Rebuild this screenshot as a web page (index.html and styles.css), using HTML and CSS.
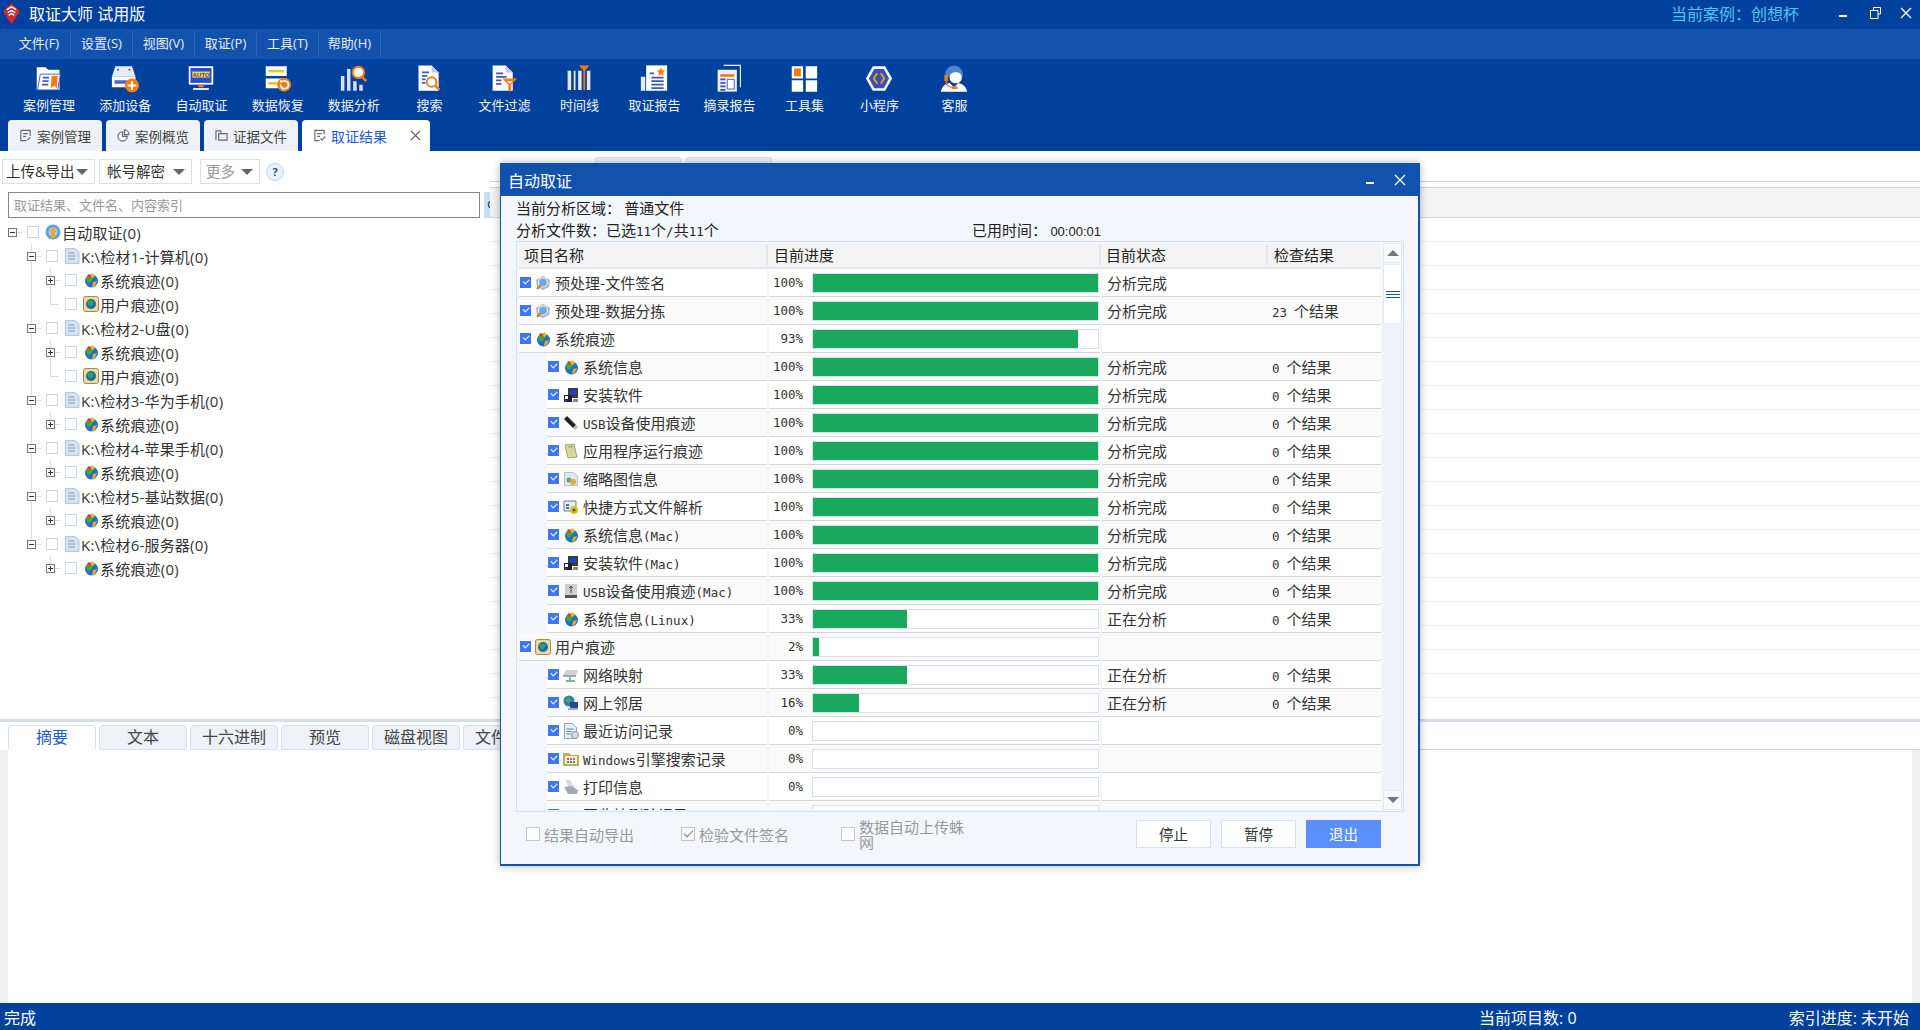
FILE: index.html
```html
<!DOCTYPE html>
<html lang="zh-CN">
<head>
    <meta charset="UTF-8">
    <title>取证大师 试用版</title>
    <link rel="stylesheet" href="styles.css">
</head>
<body>
    <!-- 图标定义 -->
    <svg class="defs" xmlns="http://www.w3.org/2000/svg">
        <symbol id="x-mark" viewBox="0 0 12 12">
            <path d="M1 1l10 10M11 1L1 11" fill="none" stroke="currentColor" stroke-width="1.300"/>
        </symbol>
        <symbol id="t-case" viewBox="0 0 32 32">
            <path d="M2 3h10l3 3h13v23H2z" fill="#fff"/>
            <path d="M6 11h23l-3 18H3z" fill="#fdfdff" stroke="#3c55c8" stroke-width="1"/>
            <path d="M9 15h7M8.500 19h7M8 23h7" stroke="#3c55c8" stroke-width="2"/>
            <path d="M19 13h7l-1 14-3-3-4 3z" fill="#f57c0c"/>
        </symbol>
        <symbol id="t-add" viewBox="0 0 32 32">
            <path d="M5 2h19l4 12H1z" fill="#e8ecf8"/>
            <circle cx="8" cy="6" r="1.200" fill="#3c55c8"/><circle cx="21" cy="6" r="1.200" fill="#3c55c8"/>
            <path d="M1 14h27v12H1z" fill="#fff"/>
            <path d="M4 18h14v4H4z" fill="#4a63c9"/>
            <circle cx="24" cy="24" r="8" fill="#f57c0c"/>
            <path d="M24 19v10M19 24h10" stroke="#fff" stroke-width="2.400"/>
        </symbol>
        <symbol id="t-auto" viewBox="0 0 32 32">
            <path d="M2 2h28v21H2z" fill="#fff"/>
            <path d="M4 4h24v17H4z" fill="#2a4bd0"/>
            <path d="M6 8h20v7H6z" fill="#f5d42a"/>
            <text x="16" y="14" text-anchor="middle" font-family="Liberation Sans" font-size="7" font-weight="700" fill="#2a4bd0">AUTO</text>
            <path d="M13 23h6v3h-6z" fill="#f57c0c"/>
            <path d="M7 27h18v2H7z" fill="#fff"/>
        </symbol>
        <symbol id="t-recover" viewBox="0 0 32 32">
            <path d="M2 2h24v11H2zM2 16h24v11H2z" fill="#fff"/>
            <path d="M5 6h18v3H5z" fill="#e5c92f"/>
            <path d="M5 20h12v3H5z" fill="#e5c92f"/>
            <circle cx="23" cy="23" r="8" fill="#f57c0c"/>
            <path d="M19 23a4.500 4.500 0 1 0 2-3.500" fill="none" stroke="#fff" stroke-width="2"/>
            <path d="M19 17l3 3-4 1z" fill="#fff"/>
        </symbol>
        <symbol id="t-analysis" viewBox="0 0 32 32">
            <path d="M1 13h4v17H1zM8 5h4v25H8zM15 19h4v11h-4zM22 23h4v7h-4z" fill="#d8def5"/>
            <circle cx="21" cy="9" r="6.500" fill="#fff" stroke="#f57c0c" stroke-width="2.400"/>
            <path d="M25 14l5 5" stroke="#f57c0c" stroke-width="3"/>
        </symbol>
        <symbol id="t-search" viewBox="0 0 32 32">
            <path d="M4 1h15l8 8v21H4z" fill="#fff"/>
            <path d="M19 1v8h8z" fill="#bcc6ec"/>
            <path d="M8 9h8M8 13h6M8 17h4M8 21h4" stroke="#3c55c8" stroke-width="2"/>
            <circle cx="19" cy="20" r="5.500" fill="#fff" stroke="#f57c0c" stroke-width="2.200"/>
            <path d="M23 24l5 5" stroke="#f57c0c" stroke-width="3"/>
        </symbol>
        <symbol id="t-filter" viewBox="0 0 32 32">
            <path d="M3 1h15l8 8v21H3z" fill="#fff"/>
            <path d="M18 1v8h8z" fill="#bcc6ec"/>
            <path d="M7 10h8M7 14h12M7 18h6M7 22h6" stroke="#3c55c8" stroke-width="2"/>
            <path d="M14 16h17l-7 7v8l-3-2v-6z" fill="#f57c0c"/>
            <path d="M19 19h7l-3 3z" fill="#fff"/>
        </symbol>
        <symbol id="t-timeline" viewBox="0 0 32 32">
            <path d="M3 7h4v22H3zM10 7h2v22h-2zM15 7h4v22h-4zM25 7h4v22h-4z" fill="#e4e8f8"/>
            <path d="M21 7h2v22h-2z" fill="#f57c0c"/>
            <path d="M16 1h12l-6 7z" fill="#f57c0c"/>
        </symbol>
        <symbol id="t-report" viewBox="0 0 32 32">
            <path d="M1 14h5v16H1z" fill="#e8ecf8"/>
            <path d="M7 1h24v29H7z" fill="#fff"/>
            <path d="M24 3l1.500 3.500 3.500.3-2.700 2.400.9 3.800-3.200-2-3.200 2 .9-3.800L19 6.800l3.500-.3z" fill="#f57c0c"/>
            <path d="M11 10h5M13 15h14M13 19h14M13 23h14M13 27h14" stroke="#3c55c8" stroke-width="2"/>
        </symbol>
        <symbol id="t-excerpt" viewBox="0 0 32 32">
            <path d="M10 1h19v25" fill="none" stroke="#fff" stroke-width="1.200"/>
            <path d="M3 6h22v25H3z" fill="#eef1fb"/>
            <path d="M6 11h16v3H6z" fill="#f57c0c"/>
            <path d="M6 17h6M6 21h6M6 25h6M6 29h6" stroke="#3c55c8" stroke-width="2"/>
            <path d="M14 17h8v11h-8z" fill="#fff" stroke="#3c55c8"/>
        </symbol>
        <symbol id="t-tools" viewBox="0 0 32 32">
            <path d="M2 2h13v14H2z" fill="#fff"/><path d="M4.500 4.500h8v9h-8z" fill="#f57c0c"/>
            <path d="M18 2h13v14H18zM2 18h13v13H2zM18 18h13v13H18z" fill="#fff"/>
        </symbol>
        <symbol id="t-mini" viewBox="0 0 32 32">
            <path d="M9 2h14l8 14-8 14H9L1 16z" fill="#fff"/>
            <path d="M10.500 5h11l6 11-6 11h-11l-6-11z" fill="#3a50b8"/>
            <path d="M14 10l-4 6 4 6M18 10l4 6-4 6" fill="none" stroke="#f5a20c" stroke-width="2"/>
        </symbol>
        <symbol id="t-service" viewBox="0 0 32 32">
            <path d="M16 1a10 10 0 0 1 10 10v3H6v-3A10 10 0 0 1 16 1z" fill="#4f85d2"/>
            <ellipse cx="18" cy="15" rx="7" ry="6.500" fill="#fff"/>
            <path d="M1 31c1-6 5-9 10-10l5 5 5-5c5 1 9 4 10 10z" fill="#fff"/>
            <path d="M5 12h4v7H5z" fill="#f57c0c"/>
            <path d="M7 19c0 5 4 7 8 7" fill="none" stroke="#f57c0c" stroke-width="1.500"/>
            <path d="M14 25h6v3h-6z" fill="#f57c0c"/>
        </symbol>

        <symbol id="i-sys" viewBox="0 0 16 16">
            <circle cx="8.500" cy="9" r="6.500" fill="#1e6fc2"/>
            <path d="M3 6c2-3 6-4 8-2l-2 4-2 3-3-1z" fill="#3da83d"/>
            <path d="M5 2l3 1-1 3-3-1z" fill="#e0412c"/>
            <path d="M9 1l3 2-2 3-2-1z" fill="#f0c020"/>
            <path d="M10 10l4-1-2 5-3 1z" fill="#e8a530"/>
        </symbol>
        <symbol id="i-user" viewBox="0 0 16 16">
            <rect x=".500" y=".500" width="15" height="15" rx="2" fill="#e9d9a6" stroke="#a98a45"/>
            <circle cx="8" cy="8" r="5" fill="#1d6ab0"/>
            <path d="M4 6c2-2 5-2 7 0l-2 4H6z" fill="#3da05a"/>
        </symbol>
        <symbol id="i-doc" viewBox="0 0 16 16">
            <path d="M1.500 .500h10l3.500 3.500v11.500H1.500z" fill="#d3e3f3" stroke="#b3c8dc"/>
            <path d="M4 5h6M4 8h7M4 11h7" stroke="#7fa1b8"/>
        </symbol>
        <symbol id="i-root" viewBox="0 0 16 16">
            <circle cx="8" cy="8" r="7.500" fill="#5da2e2"/>
            <circle cx="8" cy="8" r="4.500" fill="#a9d2f4"/>
            <path d="M8 3l4 5H10v6H6V8H4z" fill="#eda72d"/>
        </symbol>
        <symbol id="i-disk" viewBox="0 0 16 16">
            <path d="M1 5l7-4 7 4-1 7-6 3-6-3z" fill="#aeb3ba"/>
            <circle cx="8" cy="7.500" r="4.500" fill="#6ea9e4" stroke="#f1f3f6" stroke-width="1.200"/>
            <path d="M2 14l4-4" stroke="#c97f30" stroke-width="2.200"/>
        </symbol>
        <symbol id="i-install" viewBox="0 0 16 16">
            <path d="M5 1h10v10H5z" fill="#3a3a3a"/><path d="M7 3h6v5H7z" fill="#1f3fcb"/>
            <path d="M1 8h8v7H1z" fill="#222"/><path d="M2 9h3v3H2z" fill="#fff"/>
            <path d="M2 13h2v2H2z" fill="#1f3fcb"/>
            <path d="M10 12h5v3h-5z" fill="#8a8a8a"/>
        </symbol>
        <symbol id="i-usb" viewBox="0 0 16 16">
            <path d="M1 4l3-3 9 9-3 3z" fill="#222"/>
            <path d="M10 13l3-3 2 2-3 3z" fill="#bbb"/>
        </symbol>
        <symbol id="i-note" viewBox="0 0 16 16">
            <path d="M2 2l9-1 3 13-9 1z" fill="#d7d99a" stroke="#8c9464" stroke-width=".800"/>
            <path d="M5 4l5-.500" stroke="#8c9464"/>
        </symbol>
        <symbol id="i-thumb" viewBox="0 0 16 16">
            <path d="M1.500 1.500h9l4 4v9h-13z" fill="#dce8f5" stroke="#aac0d8"/>
            <circle cx="6" cy="9" r="2.500" fill="#6fa24a"/><circle cx="10" cy="11" r="3" fill="#e7a93b"/>
        </symbol>
        <symbol id="i-link" viewBox="0 0 16 16">
            <path d="M1 2h12v10H1z" fill="#e9edf3" stroke="#55606c" stroke-width=".800"/>
            <path d="M3 5h3v2H3zM3 8h3v2H3z" fill="#2f77b8"/>
            <circle cx="11" cy="11" r="4" fill="#d9c31c"/><circle cx="11" cy="11" r="1.500" fill="#5a5a20"/>
        </symbol>
        <symbol id="i-usbmac" viewBox="0 0 16 16">
            <path d="M2 1h12v14H2z" fill="#cfcfcf"/>
            <path d="M2 12h12v3H2z" fill="#555"/>
            <path d="M8 3v7M6 5l2-2 2 2" fill="none" stroke="#444"/>
        </symbol>
        <symbol id="i-net" viewBox="0 0 16 16">
            <path d="M3 3h12l-2 5H0z" fill="#cfd3d8"/>
            <path d="M0 8h13v2H0z" fill="#9ea4aa"/>
            <path d="M7 10v3M3 14h9" stroke="#3da85a" stroke-width="1.400"/>
        </symbol>
        <symbol id="i-hood" viewBox="0 0 16 16">
            <circle cx="6" cy="6" r="5.500" fill="#2e7cc2"/>
            <path d="M2 4l5-2 1 4-4 2z" fill="#4aa84a"/>
            <path d="M7 7h8v6H7z" fill="#274a88"/><path d="M5 13h10v2H5z" fill="#a5acb5"/>
        </symbol>
        <symbol id="i-recent" viewBox="0 0 16 16">
            <path d="M1.500 .500h8l4 4v11h-12z" fill="#e6eef8" stroke="#8ea6c2"/>
            <path d="M3.500 6h7M3.500 8.500h5M3.500 11h4" stroke="#4f8dc7"/>
            <circle cx="12" cy="12" r="3.500" fill="#d5dbe3" stroke="#8a939f"/>
        </symbol>
        <symbol id="i-winfolder" viewBox="0 0 16 16">
            <path d="M0 2h6l2 2h8v11H0z" fill="#c9a85a"/>
            <path d="M2 5h12v8H2z" fill="#f5efd5"/>
            <path d="M4 7h2v2H4zM7 7h2v2H7zM10 7h2v2h-2z" fill="#d65f4a"/>
            <path d="M4 10h2v2H4zM7 10h2v2H7zM10 10h2v2h-2z" fill="#4a80c2"/>
        </symbol>
        <symbol id="i-print" viewBox="0 0 16 16">
            <path d="M2 1l5 0 5 8-5 2z" fill="#d5dbe3"/>
            <path d="M1 8l7-1 7 4-1 4H5z" fill="#a3a9b0"/>
        </symbol>
        <symbol id="i-trash" viewBox="0 0 16 16">
            <path d="M1 3h6l2 2h6v9H1z" fill="#f0dba0"/>
        </symbol>
    </svg>

    <div class="app">
        <header class="titlebar">
            <svg class="logo" viewBox="0 0 18 22">
                <path d="M9 0l9 9-9 13L0 9z" fill="#d8262c"/>
                <path d="M4 7l5-3 5 3M5 10l4-2 4 2M6 13l3-2 3 2" fill="none" stroke="#fff" stroke-width="1.500"/>
            </svg>
            <span class="app-name">取证大师 试用版</span>
            <span class="case-name">当前案例：创想杯</span>
            <span class="win-btn"><i class="min-mark"></i></span>
            <span class="win-btn">
                <svg class="restore-mark" viewBox="0 0 11 12"><path d="M3.500 3V.500h7V7H8M.500 3.500h7.500v8H.500zM.500 3.500h7.500" fill="none" stroke="#fff"/></svg>
            </span>
            <span class="win-btn"><svg class="x-icon"><use href="#x-mark"/></svg></span>
        </header>

        <nav class="menubar">
            <a>文件(F)</a><a>设置(S)</a><a>视图(V)</a><a>取证(P)</a><a>工具(T)</a><a>帮助(H)</a>
        </nav>

        <div class="toolbar">
            <a class="tool"><svg><use href="#t-case"/></svg><span>案例管理</span></a>
            <a class="tool"><svg><use href="#t-add"/></svg><span>添加设备</span></a>
            <a class="tool"><svg><use href="#t-auto"/></svg><span>自动取证</span></a>
            <a class="tool"><svg><use href="#t-recover"/></svg><span>数据恢复</span></a>
            <a class="tool"><svg><use href="#t-analysis"/></svg><span>数据分析</span></a>
            <a class="tool"><svg><use href="#t-search"/></svg><span>搜索</span></a>
            <a class="tool"><svg><use href="#t-filter"/></svg><span>文件过滤</span></a>
            <a class="tool"><svg><use href="#t-timeline"/></svg><span>时间线</span></a>
            <a class="tool"><svg><use href="#t-report"/></svg><span>取证报告</span></a>
            <a class="tool"><svg><use href="#t-excerpt"/></svg><span>摘录报告</span></a>
            <a class="tool"><svg><use href="#t-tools"/></svg><span>工具集</span></a>
            <a class="tool"><svg><use href="#t-mini"/></svg><span>小程序</span></a>
            <a class="tool"><svg><use href="#t-service"/></svg><span>客服</span></a>
        </div>

        <div class="tabbar">
            <a class="tab">
                <svg viewBox="0 0 14 14"><path d="M2 1.500h10v6M2 1.500v11h6M4.500 5h5M4.500 8h3M9 12l3-3" fill="none" stroke="#666" stroke-width="1.200"/></svg>
                案例管理
            </a>
            <a class="tab">
                <svg viewBox="0 0 14 14"><path d="M6 3a5 5 0 1 0 5 5H6zM8 1a5 5 0 0 1 5 5H8z" fill="none" stroke="#666" stroke-width="1.200"/></svg>
                案例概览
            </a>
            <a class="tab">
                <svg viewBox="0 0 14 14"><path d="M1 12V2h5l1 2M4 5h9v7H4z" fill="none" stroke="#666" stroke-width="1.200"/></svg>
                证据文件
            </a>
            <a class="tab tab-on">
                <svg viewBox="0 0 14 14"><path d="M12 6V1.500H2v11h5M4.500 5h5M4.500 8h3M8 10l2 2 3-4" fill="none" stroke="#666" stroke-width="1.200"/></svg>
                <b>取证结果</b>
                <svg class="tab-close"><use href="#x-mark"/></svg>
            </a>
        </div>

        <div class="workspace">
            <div class="upper">
                <aside class="left-pane">
                    <div class="subtools">
                        <a class="drop">上传&amp;导出<i></i></a>
                        <a class="drop">帐号解密<i></i></a>
                        <a class="drop drop-off">更多<i></i></a>
                        <span class="help">?</span>
                    </div>
                    <div class="searchbar">
                        <input class="search-input" placeholder="取证结果、文件名、内容索引">
                        <span class="search-btn">
                            <svg viewBox="0 0 12 12"><circle cx="5" cy="5" r="3.500" fill="none" stroke="#35507a" stroke-width="1.500"/><path d="M8 8l3 3" stroke="#35507a" stroke-width="1.500"/></svg>
                        </span>
                    </div>
                    <ul class="tree">
                        <li>
                            <div class="node"><span class="exp minus"></span><span class="cb"></span><svg><use href="#i-root"/></svg><span>自动取证(0)</span></div>
                            <ul class="branch">
                                <li>
                                    <div class="node"><span class="exp minus"></span><span class="cb"></span><svg><use href="#i-doc"/></svg><span>K:\检材1-计算机(0)</span></div>
                                    <ul class="branch">
                                        <li><div class="node"><span class="exp plus"></span><span class="cb"></span><svg><use href="#i-sys"/></svg><span>系统痕迹(0)</span></div></li>
                                        <li><div class="node"><span class="exp leaf"></span><span class="cb"></span><svg><use href="#i-user"/></svg><span>用户痕迹(0)</span></div></li>
                                    </ul>
                                </li>
                                <li>
                                    <div class="node"><span class="exp minus"></span><span class="cb"></span><svg><use href="#i-doc"/></svg><span>K:\检材2-U盘(0)</span></div>
                                    <ul class="branch">
                                        <li><div class="node"><span class="exp plus"></span><span class="cb"></span><svg><use href="#i-sys"/></svg><span>系统痕迹(0)</span></div></li>
                                        <li><div class="node"><span class="exp leaf"></span><span class="cb"></span><svg><use href="#i-user"/></svg><span>用户痕迹(0)</span></div></li>
                                    </ul>
                                </li>
                                <li>
                                    <div class="node"><span class="exp minus"></span><span class="cb"></span><svg><use href="#i-doc"/></svg><span>K:\检材3-华为手机(0)</span></div>
                                    <ul class="branch">
                                        <li><div class="node"><span class="exp plus"></span><span class="cb"></span><svg><use href="#i-sys"/></svg><span>系统痕迹(0)</span></div></li>
                                    </ul>
                                </li>
                                <li>
                                    <div class="node"><span class="exp minus"></span><span class="cb"></span><svg><use href="#i-doc"/></svg><span>K:\检材4-苹果手机(0)</span></div>
                                    <ul class="branch">
                                        <li><div class="node"><span class="exp plus"></span><span class="cb"></span><svg><use href="#i-sys"/></svg><span>系统痕迹(0)</span></div></li>
                                    </ul>
                                </li>
                                <li>
                                    <div class="node"><span class="exp minus"></span><span class="cb"></span><svg><use href="#i-doc"/></svg><span>K:\检材5-基站数据(0)</span></div>
                                    <ul class="branch">
                                        <li><div class="node"><span class="exp plus"></span><span class="cb"></span><svg><use href="#i-sys"/></svg><span>系统痕迹(0)</span></div></li>
                                    </ul>
                                </li>
                                <li>
                                    <div class="node"><span class="exp minus"></span><span class="cb"></span><svg><use href="#i-doc"/></svg><span>K:\检材6-服务器(0)</span></div>
                                    <ul class="branch">
                                        <li><div class="node"><span class="exp plus"></span><span class="cb"></span><svg><use href="#i-sys"/></svg><span>系统痕迹(0)</span></div></li>
                                    </ul>
                                </li>
                            </ul>
                        </li>
                    </ul>
                </aside>
                <section class="right-pane">
                    <div class="back-tabs"><span></span><span></span></div>
                    <div class="result-head"></div>
                    <div class="result-rows"></div>
                </section>
            </div>
            <div class="lower">
                <div class="detail-tabs">
                    <a class="dtab dtab-on">摘要</a>
                    <a class="dtab">文本</a>
                    <a class="dtab">十六进制</a>
                    <a class="dtab">预览</a>
                    <a class="dtab">磁盘视图</a>
                    <a class="dtab">文件属性</a>
                    <div class="dtab-rest"></div>
                </div>
                <div class="detail-body"><div class="detail-main"></div></div>
            </div>
        </div>

        <footer class="statusbar">
            <span class="status-msg">完成</span>
            <span class="status-count">当前项目数: 0</span>
            <span class="status-index">索引进度: 未开始</span>
        </footer>
    </div>

    <div class="dialog">
        <div class="dlg-title">
            <span>自动取证</span>
            <i class="min-mark dlg-min"></i>
            <svg class="x-icon dlg-close"><use href="#x-mark"/></svg>
        </div>
        <div class="dlg-info">当前分析区域： 普通文件</div>
        <div class="dlg-info dlg-files">
            <span class="files-count">分析文件数：已选<span class="en">11</span>个<span class="en">/</span>共<span class="en">11</span>个</span>
            <span>已用时间： <span class="elapsed">00:00:01</span></span>
        </div>

        <div class="grid-wrap">
            <div class="grid">
                <div class="grid-head">
                    <span class="h-name">项目名称</span>
                    <span class="h-prog">目前进度</span>
                    <span class="h-state">目前状态</span>
                    <span class="h-res">检查结果</span>
                </div>
                <div class="grid-rows">
                    <div class="row">
                        <div class="c-name"><span class="check"></span><svg><use href="#i-disk"/></svg><span>预处理-文件签名</span></div>
                        <div class="c-prog"><span class="pct">100%</span><div class="bar"><div class="fill" style="width:100%"></div></div></div>
                        <div class="c-info"><span class="state">分析完成</span></div>
                    </div>
                    <div class="row">
                        <div class="c-name"><span class="check"></span><svg><use href="#i-disk"/></svg><span>预处理-数据分拣</span></div>
                        <div class="c-prog"><span class="pct">100%</span><div class="bar"><div class="fill" style="width:100%"></div></div></div>
                        <div class="c-info"><span class="state">分析完成</span><span class="res"><span class="en">23</span>个结果</span></div>
                    </div>
                    <div class="row">
                        <div class="c-name"><span class="check"></span><svg><use href="#i-sys"/></svg><span>系统痕迹</span></div>
                        <div class="c-prog"><span class="pct">93%</span><div class="bar"><div class="fill" style="width:93%"></div></div></div>
                        <div class="c-info"></div>
                    </div>
                    <div class="row sub">
                        <div class="c-name"><span class="check"></span><svg><use href="#i-sys"/></svg><span>系统信息</span></div>
                        <div class="c-prog"><span class="pct">100%</span><div class="bar"><div class="fill" style="width:100%"></div></div></div>
                        <div class="c-info"><span class="state">分析完成</span><span class="res"><span class="en">0</span>个结果</span></div>
                    </div>
                    <div class="row sub">
                        <div class="c-name"><span class="check"></span><svg><use href="#i-install"/></svg><span>安装软件</span></div>
                        <div class="c-prog"><span class="pct">100%</span><div class="bar"><div class="fill" style="width:100%"></div></div></div>
                        <div class="c-info"><span class="state">分析完成</span><span class="res"><span class="en">0</span>个结果</span></div>
                    </div>
                    <div class="row sub">
                        <div class="c-name"><span class="check"></span><svg><use href="#i-usb"/></svg><span><span class="en">USB</span>设备使用痕迹</span></div>
                        <div class="c-prog"><span class="pct">100%</span><div class="bar"><div class="fill" style="width:100%"></div></div></div>
                        <div class="c-info"><span class="state">分析完成</span><span class="res"><span class="en">0</span>个结果</span></div>
                    </div>
                    <div class="row sub">
                        <div class="c-name"><span class="check"></span><svg><use href="#i-note"/></svg><span>应用程序运行痕迹</span></div>
                        <div class="c-prog"><span class="pct">100%</span><div class="bar"><div class="fill" style="width:100%"></div></div></div>
                        <div class="c-info"><span class="state">分析完成</span><span class="res"><span class="en">0</span>个结果</span></div>
                    </div>
                    <div class="row sub">
                        <div class="c-name"><span class="check"></span><svg><use href="#i-thumb"/></svg><span>缩略图信息</span></div>
                        <div class="c-prog"><span class="pct">100%</span><div class="bar"><div class="fill" style="width:100%"></div></div></div>
                        <div class="c-info"><span class="state">分析完成</span><span class="res"><span class="en">0</span>个结果</span></div>
                    </div>
                    <div class="row sub">
                        <div class="c-name"><span class="check"></span><svg><use href="#i-link"/></svg><span>快捷方式文件解析</span></div>
                        <div class="c-prog"><span class="pct">100%</span><div class="bar"><div class="fill" style="width:100%"></div></div></div>
                        <div class="c-info"><span class="state">分析完成</span><span class="res"><span class="en">0</span>个结果</span></div>
                    </div>
                    <div class="row sub">
                        <div class="c-name"><span class="check"></span><svg><use href="#i-sys"/></svg><span>系统信息<span class="en">(Mac)</span></span></div>
                        <div class="c-prog"><span class="pct">100%</span><div class="bar"><div class="fill" style="width:100%"></div></div></div>
                        <div class="c-info"><span class="state">分析完成</span><span class="res"><span class="en">0</span>个结果</span></div>
                    </div>
                    <div class="row sub">
                        <div class="c-name"><span class="check"></span><svg><use href="#i-install"/></svg><span>安装软件<span class="en">(Mac)</span></span></div>
                        <div class="c-prog"><span class="pct">100%</span><div class="bar"><div class="fill" style="width:100%"></div></div></div>
                        <div class="c-info"><span class="state">分析完成</span><span class="res"><span class="en">0</span>个结果</span></div>
                    </div>
                    <div class="row sub">
                        <div class="c-name"><span class="check"></span><svg><use href="#i-usbmac"/></svg><span><span class="en">USB</span>设备使用痕迹<span class="en">(Mac)</span></span></div>
                        <div class="c-prog"><span class="pct">100%</span><div class="bar"><div class="fill" style="width:100%"></div></div></div>
                        <div class="c-info"><span class="state">分析完成</span><span class="res"><span class="en">0</span>个结果</span></div>
                    </div>
                    <div class="row sub">
                        <div class="c-name"><span class="check"></span><svg><use href="#i-sys"/></svg><span>系统信息<span class="en">(Linux)</span></span></div>
                        <div class="c-prog"><span class="pct">33%</span><div class="bar"><div class="fill" style="width:33%"></div></div></div>
                        <div class="c-info"><span class="state">正在分析</span><span class="res"><span class="en">0</span>个结果</span></div>
                    </div>
                    <div class="row">
                        <div class="c-name"><span class="check"></span><svg><use href="#i-user"/></svg><span>用户痕迹</span></div>
                        <div class="c-prog"><span class="pct">2%</span><div class="bar"><div class="fill" style="width:2%"></div></div></div>
                        <div class="c-info"></div>
                    </div>
                    <div class="row sub">
                        <div class="c-name"><span class="check"></span><svg><use href="#i-net"/></svg><span>网络映射</span></div>
                        <div class="c-prog"><span class="pct">33%</span><div class="bar"><div class="fill" style="width:33%"></div></div></div>
                        <div class="c-info"><span class="state">正在分析</span><span class="res"><span class="en">0</span>个结果</span></div>
                    </div>
                    <div class="row sub">
                        <div class="c-name"><span class="check"></span><svg><use href="#i-hood"/></svg><span>网上邻居</span></div>
                        <div class="c-prog"><span class="pct">16%</span><div class="bar"><div class="fill" style="width:16%"></div></div></div>
                        <div class="c-info"><span class="state">正在分析</span><span class="res"><span class="en">0</span>个结果</span></div>
                    </div>
                    <div class="row sub">
                        <div class="c-name"><span class="check"></span><svg><use href="#i-recent"/></svg><span>最近访问记录</span></div>
                        <div class="c-prog"><span class="pct">0%</span><div class="bar"></div></div>
                        <div class="c-info"></div>
                    </div>
                    <div class="row sub">
                        <div class="c-name"><span class="check"></span><svg><use href="#i-winfolder"/></svg><span><span class="en">Windows</span>引擎搜索记录</span></div>
                        <div class="c-prog"><span class="pct">0%</span><div class="bar"></div></div>
                        <div class="c-info"></div>
                    </div>
                    <div class="row sub">
                        <div class="c-name"><span class="check"></span><svg><use href="#i-print"/></svg><span>打印信息</span></div>
                        <div class="c-prog"><span class="pct">0%</span><div class="bar"></div></div>
                        <div class="c-info"></div>
                    </div>
                    <div class="row sub">
                        <div class="c-name"><span class="check"></span><svg><use href="#i-trash"/></svg><span>回收站删除记录</span></div>
                        <div class="c-prog"><span class="pct">0%</span><div class="bar"></div></div>
                        <div class="c-info"></div>
                    </div>
                </div>
            </div>
            <div class="scroll">
                <span class="sc-btn"><i class="arr-up"></i></span>
                <span class="sc-thumb"><i></i></span>
                <span class="sc-track"></span>
                <span class="sc-btn"><i class="arr-down"></i></span>
            </div>
        </div>

        <div class="dlg-foot">
            <label class="opt opt-a"><span class="opt-box"></span>结果自动导出</label>
            <label class="opt opt-b"><span class="opt-box opt-box-on"></span>检验文件签名</label>
            <label class="opt opt-c"><span class="opt-box"></span><span class="opt-wrap">数据自动上传蛛网</span></label>
            <a class="btn">停止</a>
            <a class="btn">暂停</a>
            <a class="btn btn-main">退出</a>
        </div>
    </div>
</body>
</html>
```

FILE: styles.css
```css
* {
    box-sizing: border-box;
}
html, body {
    margin: 0;
    height: 100%;
    overflow: hidden;
}
body {
    font-family: "Open Sans", "Noto Sans CJK SC", sans-serif;
    color: #333;
    background: #fff;
}
ul {
    list-style: none;
    margin: 0;
    padding: 0;
}
.defs {
    display: none;
}
.app {
    display: flex;
    flex-direction: column;
    height: 1030px;
}

/* 标题栏 */
.titlebar {
    display: flex;
    align-items: center;
    height: 29px;
    flex: none;
    background: #00419e;
    color: #fff;
    padding: 0 0 3px 3px;
}
.logo {
    width: 17px;
    height: 21px;
}
.app-name {
    margin-left: 9px;
    font-size: 16px;
}
.case-name {
    margin-left: auto;
    margin-right: 28px;
    font-size: 16px;
    color: #4fc3f7;
}
.win-btn {
    display: flex;
    align-items: center;
    justify-content: center;
    width: 32px;
    height: 20px;
}
.win-btn:last-child {
    width: 29px;
}
.x-icon {
    width: 12px;
    height: 12px;
}
.min-mark {
    display: inline-block;
    width: 8px;
    height: 2px;
    background: #fff;
    margin-top: 6px;
}
.restore-mark {
    width: 11px;
    height: 12px;
}

/* 菜单 */
.menubar {
    display: flex;
    height: 30px;
    flex: none;
    background: #1252ac;
    padding-top: 2px;
}
.menubar a {
    width: 62px;
    height: 26px;
    line-height: 24px;
    text-align: center;
    font-size: 13px;
    color: #e6edf8;
    border-right: 1px solid #2f68b8;
}
.menubar a:first-child {
    width: 71px;
    padding-left: 8px;
}

/* 工具栏 */
.toolbar {
    display: flex;
    height: 61px;
    flex: none;
    background: #00419e;
    padding: 5px 0 0 11px;
}
.tool {
    display: flex;
    flex-direction: column;
    align-items: center;
    width: 76.200px;
    color: #eef3fb;
    font-size: 13px;
}
.tool:nth-child(n+6) {
    width: 75px;
}
.tool svg {
    width: 28px;
    height: 29px;
}
.tool span {
    line-height: 20px;
    margin-top: 2px;
}
.tabbar {
    display: flex;
    height: 31px;
    flex: none;
    background: #00419e;
    padding-left: 8px;
    gap: 4px;
    align-items: flex-end;
}
.tab {
    display: flex;
    align-items: center;
    justify-content: center;
    gap: 5px;
    width: 94px;
    height: 31px;
    background: #eef1f7;
    border-radius: 4px 4px 0 0;
    font-size: 13.500px;
    color: #444;
}
.tab svg {
    width: 13px;
    height: 13px;
}
.tab-on {
    width: 128px;
    background: #fff;
    justify-content: flex-start;
    padding-left: 11px;
}
.tab-on b {
    font-weight: 400;
    font-size: 14px;
    color: #1f5ad8;
}
.tab .tab-close {
    width: 11px;
    height: 11px;
    margin-left: 18px;
    color: #555;
}

/* 主区域 */
.workspace {
    flex: 1;
    display: flex;
    flex-direction: column;
    min-height: 0;
}
.upper {
    display: flex;
    height: 568px;
    flex: none;
}
.left-pane {
    width: 490px;
    flex: none;
    padding-top: 8px;
}
.subtools {
    display: flex;
    align-items: center;
    height: 25px;
    padding-left: 2px;
    gap: 4px;
}
.drop {
    display: flex;
    align-items: center;
    justify-content: space-between;
    width: 93px;
    height: 25px;
    padding: 0 6px 2px 3px;
    border: 1px solid #d5e0f0;
    font-size: 14.500px;
    color: #333;
}
.drop i {
    width: 0;
    height: 0;
    margin-top: 3px;
    border: 6px solid transparent;
    border-top: 6px solid #666;
    border-bottom: 0;
}
.drop + .drop {
    padding-left: 7px;
}
.drop-off {
    width: 60px;
    margin-left: 4px;
    padding-left: 5px !important;
    color: #999;
}
.help {
    width: 18px;
    height: 18px;
    margin-left: 2px;
    border: 1px solid #c5d3e8;
    border-radius: 50%;
    background: #e9f0fa;
    color: #2a4f9a;
    font-size: 11px;
    font-weight: 700;
    line-height: 16px;
    text-align: center;
}
.searchbar {
    display: flex;
    margin: 8px 0 0 8px;
}
.search-input {
    width: 472px;
    height: 26px;
    flex: none;
    border: 1px solid #888;
    padding: 0 4px 0 5px;
    font: 13px "Open Sans", "Noto Sans CJK SC", sans-serif;
    outline: none;
}
.search-input::placeholder {
    color: #999;
}
.search-btn {
    display: flex;
    align-items: center;
    width: 20px;
    height: 26px;
    margin-left: 4px;
    padding-left: 3px;
    background: #c9dcf5;
}
.search-btn svg {
    width: 11px;
    height: 11px;
}

/* 树 */
.tree {
    margin-top: 2px;
    font-size: 15px;
    letter-spacing: 0.200px;
    color: #333;
}
.branch {
    margin-left: 19px;
}
.branch > li {
    position: relative;
}
.branch > li::before {
    content: "";
    position: absolute;
    left: 12px;
    top: 0;
    bottom: 0;
    width: 1px;
    background: #dcdcdc;
}
.branch > li:last-child::before {
    bottom: auto;
    height: 12px;
}
.node {
    position: relative;
    display: flex;
    align-items: center;
    height: 24px;
    padding-left: 8px;
}
.exp {
    position: relative;
    width: 9px;
    height: 9px;
    flex: none;
    margin-right: 10px;
    border: 1px solid #777;
    background: #fff;
}
.exp::before {
    content: "";
    position: absolute;
    left: 1px;
    top: 3px;
    width: 5px;
    height: 1px;
    background: #333;
}
.exp::after {
    content: "";
    position: absolute;
    left: 8px;
    top: 3px;
    width: 5px;
    height: 1px;
    background: #dcdcdc;
}
.plus {
    background: linear-gradient(#333, #333) center / 1px 5px no-repeat #fff;
}
.leaf {
    border: 0;
    background: none;
}
.leaf::before {
    left: 4px;
    top: 4px;
    width: 9px;
    background: #dcdcdc;
}
.leaf::after {
    display: none;
}
.cb {
    width: 12px;
    height: 12px;
    flex: none;
    border: 1px solid #cdd9ec;
    background: #fff;
    margin-top: -1px;
}
.node svg {
    width: 16px;
    height: 16px;
    flex: none;
    margin: 0 1px 0 6px;
}

/* 右侧背景列表 */
.right-pane {
    flex: 1;
    display: flex;
    flex-direction: column;
    min-width: 0;
}
.back-tabs {
    display: flex;
    gap: 5px;
    height: 31px;
    padding: 6px 0 0 105px;
    border-bottom: 1px solid #cfcfe0;
}
.back-tabs span {
    width: 86px;
    height: 12px;
    border: 1px solid #d5e0f0;
    border-radius: 3px 3px 0 0;
    background: #eef1f7;
}
.result-head {
    height: 31px;
    margin-top: 5px;
    background: #f3f3f3;
    border-top: 1px solid #cfcfe0;
    border-bottom: 1px solid #cfcfe0;
    flex: none;
}
.result-rows {
    flex: 1;
    background: repeating-linear-gradient(#fff 0 23px, #eee 23px 24px);
}

/* 下方详情 */
.lower {
    flex: 1;
    display: flex;
    flex-direction: column;
    min-height: 0;
    border-top: 3px solid #d4deee;
}
.detail-tabs {
    display: flex;
    height: 28px;
    flex: none;
    padding: 3px 0 0 8px;
    gap: 3px;
}
.dtab {
    width: 88px;
    height: 25px;
    flex: none;
    background: #eef1f7;
    border: 1px solid #d5e0f0;
    border-radius: 4px 4px 0 0;
    text-align: center;
    font-size: 16px;
    line-height: 23px;
    color: #444;
}
.dtab-on {
    background: #fff;
    border-bottom-color: #fff;
    color: #1f5ad8;
}
.dtab-rest {
    flex: 1;
    border-bottom: 1px solid #cfcfe0;
}
.detail-body {
    flex: 1;
    background: #f0f0f0;
    padding: 0 8px;
}
.detail-main {
    height: 100%;
    background: #fff;
}
.statusbar {
    display: flex;
    height: 27px;
    flex: none;
    align-items: center;
    background: #00419e;
    color: #fff;
    font-size: 16px;
    padding: 0 11px 0 4px;
}
.status-count {
    margin-left: auto;
}
.status-index {
    margin-left: 212px;
}

/* 自动取证对话框 */
.dialog {
    position: absolute;
    left: 500px;
    top: 163px;
    width: 920px;
    height: 703px;
    background: #f3f6fb;
    border: solid #1252ac;
    border-width: 0 2px 2px 1px;
    box-shadow: 0 0 8px rgba(0, 0, 0, 0.3);
    font-family: "Noto Sans CJK SC", sans-serif;
    font-size: 15px;
    color: #333;
}
.dlg-title {
    display: flex;
    align-items: center;
    height: 33px;
    margin: 0 -2px 0 -1px;
    padding: 0 14px 0 8px;
    background: #1252ac;
    color: #fff;
    font-size: 16px;
}
.dlg-min {
    margin-left: auto;
}
.dlg-close {
    margin-left: 20px;
}
.dlg-info {
    height: 22px;
    padding-left: 15px;
    line-height: 24px;
    color: #222;
}
.dlg-files {
    display: flex;
    line-height: 24px;
}
.files-count {
    width: 456px;
}
.en {
    font-family: "DejaVu Sans Mono", monospace;
    font-size: 12.500px;
}
.elapsed {
    font-family: "Liberation Sans", sans-serif;
    font-size: 13px;
}
.grid-wrap {
    display: flex;
    width: 888px;
    height: 571px;
    margin: 1px 0 0 15px;
    padding: 1px;
    border: 1px solid #d5e0f0;
}
.grid {
    width: 863px;
    flex: none;
    padding-left: 1px;
}
.grid-head {
    display: flex;
    align-items: center;
    height: 26px;
    background: #f3f3f3;
    border-bottom: 2px solid #dfe6f2;
    color: #222;
}
.grid-head span {
    height: 20px;
    line-height: 20px;
}
.h-name {
    width: 249px;
    padding-left: 5px;
    border-right: 2px solid #dfe6f2;
}
.h-prog {
    width: 333px;
    padding-left: 6px;
    border-right: 2px solid #dfe6f2;
}
.h-state {
    width: 167px;
    padding-left: 5px;
    border-right: 2px solid #dfe6f2;
}
.h-res {
    padding-left: 6px;
}
.grid-rows {
    height: 541px;
    overflow: hidden;
}
.row {
    display: flex;
    height: 28px;
}
.row > div {
    height: 28px;
    border-bottom: 1px solid #d6d6d6;
    background: #fff;
}
.row:nth-child(even) > div {
    background: #fafafa;
}
.c-name {
    display: flex;
    align-items: center;
    width: 248px;
    flex: none;
    padding-left: 1px;
    white-space: nowrap;
}
.row.sub .c-name {
    width: 220px;
    margin-left: 28px;
}
.c-name svg {
    width: 16px;
    height: 16px;
    flex: none;
    margin: 0 4px;
}
.check {
    position: relative;
    width: 11px;
    height: 11px;
    flex: none;
    background: #3d76ef;
}
.check::after {
    content: "";
    position: absolute;
    left: 3px;
    top: 2px;
    width: 5px;
    height: 3px;
    border: solid #fff;
    border-width: 0 0 1.500px 1.500px;
    transform: rotate(-45deg);
}
.c-prog {
    display: flex;
    align-items: center;
    width: 331px;
    flex: none;
    margin: 0 2px;
}
.pct {
    width: 34px;
    text-align: right;
    font-family: "DejaVu Sans Mono", monospace;
    font-size: 12.500px;
}
.bar {
    width: 287px;
    height: 20px;
    margin-left: 9px;
    border: 1px solid #d5e1f2;
    background: #fff;
}
.fill {
    height: 100%;
    background: #1aa85f;
}
.c-info {
    flex: 1;
    display: flex;
    align-items: center;
}
.state {
    width: 170px;
    padding-left: 5px;
}
.res .en {
    margin-right: 7px;
}
.scroll {
    display: flex;
    flex-direction: column;
    width: 19px;
    margin-left: 2px;
}
.sc-btn {
    display: flex;
    align-items: center;
    justify-content: center;
    height: 20px;
    flex: none;
    background: #f8f9fc;
    border: 1px solid #e3e9f3;
}
.arr-up, .arr-down {
    width: 0;
    height: 0;
    border: 6px solid transparent;
}
.arr-up {
    border-bottom: 6px solid #777;
    border-top: 0;
}
.arr-down {
    border-top: 6px solid #777;
    border-bottom: 0;
}
.sc-thumb {
    display: flex;
    align-items: center;
    justify-content: center;
    height: 60px;
    flex: none;
    margin-top: 1px;
    background: #fff;
    border: 1px solid #e3e9f3;
}
.sc-thumb i {
    width: 14px;
    height: 7px;
    border-top: 1px solid #1252ac;
    border-bottom: 1px solid #1252ac;
    background: linear-gradient(#1252ac, #1252ac) center / 100% 1px no-repeat;
}
.sc-track {
    flex: 1;
    background: #eef1f7;
}
.dlg-foot {
    position: relative;
    display: flex;
    align-items: center;
    height: 28px;
    margin: 8px 37px 0 0;
    justify-content: flex-end;
}
.opt {
    position: absolute;
    display: flex;
    align-items: center;
    top: 0;
    height: 28px;
    font-size: 15px;
    color: #999;
}
.opt-a { left: 25px; }
.opt-b { left: 180px; }
.opt-c { left: 340px; }
.opt-box {
    position: relative;
    width: 14px;
    height: 14px;
    margin-right: 4px;
    border: 1px solid #c8c8c8;
    background: #fff;
    flex: none;
}
.opt-box-on {
    background: #f7f7f7;
}
.opt-box-on::after {
    content: "";
    position: absolute;
    left: 2px;
    top: 2px;
    width: 8px;
    height: 4px;
    border: solid #777;
    border-width: 0 0 1.500px 1.500px;
    transform: rotate(-45deg);
}
.opt-wrap {
    width: 106px;
    line-height: 15px;
}
.btn {
    width: 75px;
    height: 28px;
    margin-left: 10px;
    background: #fff;
    border: 1px solid #d5e0f0;
    text-align: center;
    line-height: 26px;
    font-size: 14.500px;
    color: #333;
}
.btn-main {
    background: #5b8ffe;
    border-color: #5b8ffe;
    color: #fff;
}
```
